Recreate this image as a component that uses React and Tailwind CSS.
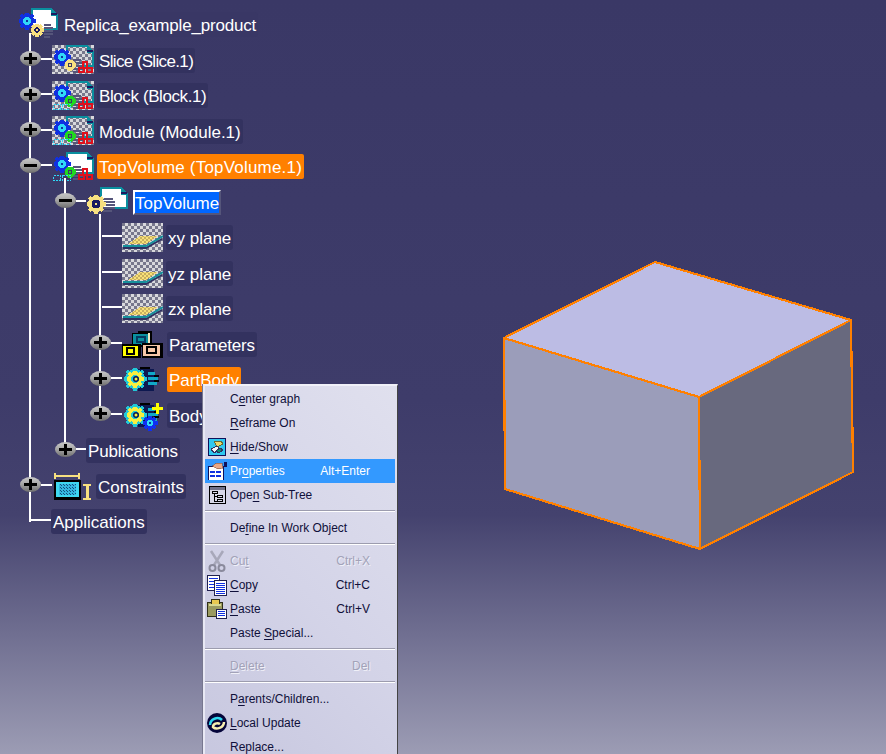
const CHECK_ID = "dither";

function Gear({ x, y, r, fill, hole = "#1a1a60", ring, dot = true }) {
  const teeth = [0, 45, 90, 135];
  return (
    <g shapeRendering="crispEdges">
      {teeth.map((a) => (
        <rect key={a} x={x - r - 1.5} y={y - 2} width={2 * r + 3} height={4} fill={fill} transform={`rotate(${a} ${x} ${y})`} />
      ))}
      <circle cx={x} cy={y} r={r} fill={fill} />
      <circle cx={x} cy={y} r={r * 0.55} fill={ring || hole} />
      {dot && <rect x={x - 1} y={y - 1} width={2} height={2} fill={ring ? "#1030a0" : fill} />}
    </g>
  );
}

function Shadow({ x, y, w = 10 }) {
  return (
    <g fill="#55557a" shapeRendering="crispEdges">
      <rect x={x} y={y - 6} width={w - 2} height={2} />
      <rect x={x} y={y - 3} width={w} height={2} />
      <rect x={x} y={y} width={w} height={2} />
      <rect x={x} y={y + 3} width={w} height={2} />
      <rect x={x} y={y + 6} width={w - 3} height={2} />
    </g>
  );
}

function Page({ x, y, w, h, dim }) {
  return (
    <g shapeRendering="crispEdges">
      <path d={`M${x} ${y}h${w - 7}l7 6v${h - 6}h${-w}z`} fill={dim ? `url(#${CHECK_ID})` : "#fff"} />
      <path d={`M${x} ${y}h${w - 7}v2h${-w + 9}v${h - 2}h-2z`} fill="#0a8f9f" />
      <path d={`M${x + w - 7} ${y}l7 6v2h-7z`} fill="#0a8f9f" />
      <rect x={x + w - 7} y={y + 5} width={6} height={2} fill="#1a1a60" />
      <rect x={x + w - 2} y={y + 7} width={2} height={h - 7} fill="#0a8f9f" />
      <rect x={x} y={y + h - 2} width={w} height={2} fill="#0a8f9f" />
    </g>
  );
}

function Links({ x, y }) {
  return (
    <g fill="none" stroke="#e0101c" strokeWidth="2" shapeRendering="crispEdges">
      <rect x={x + 4} y={y} width={4} height={6} />
      <rect x={x} y={y + 6} width={5} height={4} />
      <rect x={x + 8} y={y + 6} width={5} height={4} />
    </g>
  );
}

function Defs() {
  return (
    <defs>
      <pattern id={CHECK_ID} width="6" height="6" patternUnits="userSpaceOnUse">
        <rect width="6" height="6" fill="#d8d8dc" />
        <rect width="3" height="3" fill="#77778c" />
        <rect x="3" y="3" width="3" height="3" fill="#77778c" />
      </pattern>
      <pattern id="yellowDither" width="4" height="4" patternUnits="userSpaceOnUse">
        <rect width="4" height="4" fill="#f8e078" />
        <rect width="2" height="2" fill="#c8b060" />
        <rect x="2" y="2" width="2" height="2" fill="#c8b060" />
      </pattern>
    </defs>
  );
}

function RootIcon() {
  return (
    <svg width="41" height="32" className="shrink-0" overflow="visible">
      <Defs />
      <Page x={14} y={-1} w={27} h={22} />
      <Shadow x={27} y={21} w={9} />
      <Gear x={10} y={12} r={7} fill="#1030e0" ring="#30d8f8" />
      <Gear x={20} y={21} r={5} fill="#f8e080" />
    </svg>
  );
}

function InstanceIcon({ gear = "#f8e080", bars, dim = true }) {
  return (
    <svg width="42" height="30" className="shrink-0" overflow="visible">
      <Defs />
      {dim && <rect x="0" y="0" width="42" height="29" fill={`url(#${CHECK_ID})`} />}
      <Page x={14} y={0} w={28} h={22} dim={dim} />
      <Shadow x={21} y={20} w={10} />
      <Gear x={10} y={12} r={7} fill="#1030e0" ring="#30d8f8" />
      <Gear x={18} y={20} r={4} fill={gear} hole="#3b3966" />
      {bars && (
        <g fill="none" stroke="#30d8f8" strokeWidth="1" shapeRendering="crispEdges" strokeDasharray="2 1">
          <rect x="1.5" y="23.5" width="7" height="5" />
          <rect x="10.5" y="23.5" width="8" height="5" />
        </g>
      )}
      <Links x={27} y={17} />
    </svg>
  );
}

function PartIcon() {
  return (
    <svg width="42" height="30" className="shrink-0" overflow="visible">
      <Defs />
      <Page x={14} y={0} w={28} h={22} />
      <Shadow x={17} y={17} w={12} />
      <Gear x={10} y={17} r={8} fill="#f8e080" />
    </svg>
  );
}

function PlaneIcon() {
  return (
    <svg width="41" height="29" className="shrink-0">
      <Defs />
      <rect width="41" height="29" fill={`url(#${CHECK_ID})`} />
      <path d="M6 21L18 13H36L24 21z" fill="url(#yellowDither)" shapeRendering="crispEdges" />
      <path d="M1 25H24L40 16" fill="none" stroke="#303060" strokeWidth="2" />
      <path d="M1 23H24L41 13" fill="none" stroke="#16909c" strokeWidth="2" />
    </svg>
  );
}

function ParamsIcon() {
  return (
    <svg width="41" height="27" className="shrink-0" shapeRendering="crispEdges">
      <rect x="10" y="2" width="18" height="14" fill="#000" />
      <rect x="28" y="0" width="2" height="14" fill="#000" />
      <rect x="16" y="0" width="13" height="2" fill="#000" />
      <rect x="11" y="3" width="16" height="11" fill="#0a8f9f" />
      <rect x="26" y="2" width="2" height="12" fill="#f0e8c0" />
      <rect x="15" y="6" width="8" height="5" fill="none" stroke="#063a60" strokeWidth="2" />
      <rect x="0" y="13" width="19" height="14" fill="#000" />
      <rect x="1" y="15" width="15" height="10" fill="#ffff00" />
      <rect x="5" y="17" width="7" height="6" fill="none" stroke="#000" strokeWidth="2" />
      <rect x="20" y="12" width="21" height="15" fill="#000" />
      <rect x="21" y="14" width="17" height="11" fill="#f8c8a8" />
      <rect x="25" y="16" width="9" height="6" fill="none" stroke="#000" strokeWidth="2" />
    </svg>
  );
}

function BodyIcon({ extra }) {
  return (
    <svg width="38" height="27" className="shrink-0" overflow="visible">
      <g shapeRendering="crispEdges">
        <rect x="16" y="3" width="16" height="22" fill="#0d1850" />
        <rect x="18" y="1" width="10" height="2" fill="#000" />
        <rect x="26" y="6" width="7" height="3" fill="#10a8c8" />
        <rect x="26" y="11" width="10" height="3" fill="#10a8c8" />
        <rect x="26" y="16" width="9" height="3" fill="#10a8c8" />
        <rect x="32" y="9" width="5" height="2" fill="#000" />
        <rect x="32" y="14" width="5" height="2" fill="#000" />
      </g>
      <Gear x={13} y={13} r={10} fill="#20c8d8" ring="#20c8d8" dot={false} />
      <Gear x={13} y={13} r={7} fill="#f8f040" hole="#20c8d8" dot={false} />
      <circle cx="14" cy="13" r="3" fill="#0d1850" />
      <circle cx="14" cy="13" r="1.5" fill="#f8f040" />
      {extra && (
        <g shapeRendering="crispEdges">
          <rect x="30" y="5" width="11" height="3" fill="#ffff00" />
          <rect x="34" y="1" width="3" height="11" fill="#ffff00" />
          <Gear x={28} y={21} r={6} fill="#1030f0" ring="#30d8f8" />
        </g>
      )}
    </svg>
  );
}

function ConstraintIcon() {
  return (
    <svg width="39" height="27" className="shrink-0" shapeRendering="crispEdges">
      <defs>
        <pattern id="blueMesh" width="3" height="3" patternUnits="userSpaceOnUse">
          <rect width="3" height="3" fill="#35b8e0" />
          <rect width="1" height="1" fill="#14507f" />
          <rect x="2" y="2" width="1" height="1" fill="#14507f" />
        </pattern>
      </defs>
      <rect x="2" y="0" width="2" height="6" fill="#f8e080" />
      <rect x="26" y="0" width="2" height="6" fill="#f8e080" />
      <rect x="3" y="2" width="25" height="2" fill="#f8e080" />
      <rect x="2" y="7" width="27" height="20" fill="#000" />
      <rect x="4" y="9" width="23" height="15" fill="#40d8f0" />
      <rect x="7" y="11" width="17" height="11" fill="url(#blueMesh)" />
      <rect x="31" y="11" width="8" height="2" fill="#f8e080" />
      <rect x="34" y="11" width="3" height="15" fill="#f8e080" />
      <rect x="31" y="25" width="8" height="2" fill="#f8e080" />
    </svg>
  );
}

function Toggle({ minus }) {
  return (
    <div className="relative w-[21px] h-[15px] shrink-0 rounded-[50%] bg-[linear-gradient(#c8c8c8,#a8a8a8_45%,#6e6e6e)] flex items-center justify-center">
      <span className="absolute w-[13px] h-[3px] bg-black" />
      {!minus && <span className="absolute w-[3px] h-[11px] bg-black" />}
    </div>
  );
}

function Label({ children, kind, track }) {
  const styles = {
    plain: "bg-[#33325f] rounded-[3px]",
    faint: "bg-[#393765] rounded-[3px]",
    orange: "bg-[#ff8000] rounded-[2px]",
    selected:
      "bg-[#0066ff] h-[23px] border-t-2 border-l-2 border-white border-r-2 border-b-2 border-r-[#55557a] border-b-[#55557a] px-0!",
  };
  return (
    <span className={`h-[25px] px-[2px] pt-[2px] flex items-center whitespace-nowrap text-white text-[17px] leading-none shrink-0 ${track || ""} ${styles[kind || "plain"]}`}>
      {children}
    </span>
  );
}

function Row({ pad, toggle, stub = 11, icon, gap = 4, kind, track, children }) {
  return (
    <div className="flex items-center h-[35.5px]" style={{ paddingLeft: pad }}>
      {toggle && (
        <div className="flex items-center mb-[3px]">
          <Toggle minus={toggle === "minus"} />
          <span className="h-[2px] bg-white" style={{ width: stub }} />
        </div>
      )}
      {!toggle && stub > 0 && <span className="h-[2px] bg-white mb-[3px]" style={{ width: stub }} />}
      {icon}
      <span style={{ marginLeft: gap }}>
        <Label kind={kind} track={track}>{children}</Label>
      </span>
    </div>
  );
}

function Tree() {
  return (
    <div className="relative z-0 pt-[7px] font-['Liberation_Sans',sans-serif]">
      <span className="absolute left-[29px] top-[33px] h-[489px] w-[2px] bg-white" />
      <span className="absolute left-[64px] top-[178px] h-[270px] w-[2px] bg-white" />
      <span className="absolute left-[99px] top-[214px] h-[200px] w-[2px] bg-white" />

      <Row pad={17} stub={0} icon={<RootIcon />} gap={4} kind="faint" track="tracking-[-0.2px]">Replica_example_product</Row>
      <Row pad={20} toggle="plus" icon={<InstanceIcon />} gap={3} track="tracking-[-0.65px]">Slice (Slice.1)</Row>
      <Row pad={20} toggle="plus" icon={<InstanceIcon gear="#20d820" bars />} gap={3} track="tracking-[-0.4px]">Block (Block.1)</Row>
      <Row pad={20} toggle="plus" icon={<InstanceIcon gear="#20d820" bars />} gap={3}>Module (Module.1)</Row>
      <Row pad={20} toggle="minus" icon={<InstanceIcon gear="#20d820" bars dim={false} />} gap={3} kind="orange" track="tracking-[0.2px]">TopVolume (TopVolume.1)</Row>
      <Row pad={55} toggle="minus" stub={10} icon={<PartIcon />} gap={5} kind="selected">TopVolume</Row>
      <Row pad={102} stub={20} icon={<PlaneIcon />} gap={3}>xy plane</Row>
      <Row pad={102} stub={20} icon={<PlaneIcon />} gap={3}>yz plane</Row>
      <Row pad={102} stub={20} icon={<PlaneIcon />} gap={3}>zx plane</Row>
      <Row pad={90} toggle="plus" icon={<ParamsIcon />} gap={4} track="tracking-[-0.2px]">Parameters</Row>
      <Row pad={90} toggle="plus" icon={<BodyIcon />} gap={7} kind="orange">PartBody</Row>
      <Row pad={90} toggle="plus" icon={<BodyIcon extra />} gap={7}>Body.2</Row>
      <Row pad={55} toggle="plus" stub={10} gap={0} track="tracking-[-0.15px]">Publications</Row>
      <Row pad={20} toggle="plus" icon={<ConstraintIcon />} gap={5}>Constraints</Row>
      <Row pad={30} stub={21} gap={0}>Applications</Row>
    </div>
  );
}

function Cube() {
  return (
    <svg width="886" height="754" className="absolute left-0 top-0 pointer-events-none">
      <polygon points="504,338 699,397 700,549 505,489" fill="#9b9dba" />
      <polygon points="699,397 851,320 853,472 700,549" fill="#68697e" />
      <polygon points="655,262 851,320 699,397 504,338" fill="#bcbce4" />
      <g fill="none" stroke="#ff8000" strokeWidth="2.2" strokeLinejoin="round" shapeRendering="crispEdges">
        <polygon points="504,338 655,262 851,320 699,397" />
        <polyline points="504,338 505,489 700,549 853,472 851,320" />
        <line x1="699" y1="397" x2="700" y2="549" />
      </g>
    </svg>
  );
}

function HideIcon() {
  return (
    <svg width="18" height="18" shapeRendering="crispEdges">
      <rect x="0.5" y="0.5" width="17" height="17" fill="#30c8f0" stroke="#10105a" />
      <path d="M6 3h7l2 3-6 3z" fill="#e8d870" stroke="#6a6a30" />
      <path d="M3 11l6-3 3 3-6 4z" fill="#f8f8f8" stroke="#303060" />
      <path d="M8 13l4-3 3 2-4 3z" fill="#0a8f70" stroke="#303060" />
    </svg>
  );
}

function PropsIcon() {
  return (
    <svg width="21" height="18" shapeRendering="crispEdges">
      <rect x="1" y="4" width="15" height="14" fill="#fff" stroke="#10105a" />
      <rect x="3" y="9" width="11" height="2" fill="#1030e0" />
      <rect x="3" y="13" width="11" height="2" fill="#1030e0" />
      <rect x="8" y="9" width="1" height="6" fill="#fff" />
      <path d="M5 4l5-3h5l1 5-5 1z" fill="#e8a888" stroke="#704030" strokeWidth="0.5" />
      <rect x="17" y="0" width="3" height="5" fill="#10105a" />
    </svg>
  );
}

function SubTreeIcon() {
  return (
    <svg width="17" height="18" shapeRendering="crispEdges">
      <rect x="0.5" y="0.5" width="16" height="17" fill="#d8d8e8" stroke="#000" />
      <rect x="1" y="1" width="15" height="3" fill="#707088" />
      <g fill="none" stroke="#000">
        <rect x="3.5" y="5.5" width="5" height="2" />
        <rect x="8.5" y="9.5" width="5" height="2" />
        <rect x="8.5" y="13.5" width="5" height="2" />
        <path d="M5.5 8v7h3M5.5 10.5h3" />
      </g>
    </svg>
  );
}

function ScissorsIcon() {
  return (
    <svg width="18" height="22" fill="none" stroke="#a8a8ba">
      <path d="M3 1l9 14M15 1L6 15" strokeWidth="2.5" />
      <circle cx="4.5" cy="18" r="3" strokeWidth="2" stroke="#8a8a9c" />
      <circle cx="13.5" cy="18" r="3" strokeWidth="2" stroke="#8a8a9c" />
    </svg>
  );
}

function DocLines({ x, y, w, h, lines }) {
  return (
    <g shapeRendering="crispEdges">
      <rect x={x + 0.5} y={y + 0.5} width={w} height={h} fill="#fff" stroke="#202050" />
      {lines.map((d) => (
        <rect key={d} x={x + 2} y={y + d} width={w - 3} height={1} fill="#1030e0" />
      ))}
    </g>
  );
}

function CopyIcon() {
  return (
    <svg width="20" height="21">
      <DocLines x={0} y={0} w={12} h={15} lines={[3, 6, 9, 12]} />
      <DocLines x={7} y={5} w={12} h={15} lines={[3, 5, 7, 9, 11, 13]} />
    </svg>
  );
}

function PasteIcon() {
  return (
    <svg width="20" height="20" shapeRendering="crispEdges">
      <rect x="0.5" y="3.5" width="15" height="14" fill="#9a9a60" stroke="#303018" />
      <rect x="4" y="0.5" width="8" height="5" fill="#e8c850" stroke="#303018" />
      <rect x="2" y="5" width="12" height="2" fill="#d8d890" />
      <DocLines x={9} y={10} w={10} h={9} lines={[2, 4, 6]} />
    </svg>
  );
}

function SwirlIcon() {
  return (
    <svg width="20" height="20">
      <circle cx="10" cy="10" r="10" fill="#05053a" />
      <path d="M3 12c0-6 8-9 12-5" fill="none" stroke="#30d8f0" strokeWidth="2.5" />
      <path d="M17 9c0 6-8 8-11 5 0-3 4-5 7-3" fill="none" stroke="#f8f0b0" strokeWidth="2.5" />
    </svg>
  );
}

function Mn({ children }) {
  return <span className="underline underline-offset-2">{children}</span>;
}

function Item({ icon, children, shortcut, active, off }) {
  const color = active ? "text-white" : off ? "text-[#a2a2b8] [text-shadow:1px_1px_0_#f0f0f8]" : "text-[#10103a]";
  return (
    <div className={`relative flex items-center h-6 pl-[25px] pr-[25px] ${color} ${active ? "bg-[#3399ff]" : ""}`}>
      {icon && <span className="absolute left-[1px] top-0 h-6 w-[22px] flex items-center justify-center">{icon}</span>}
      <span className="flex-1 whitespace-nowrap">{children}</span>
      {shortcut && <span className="whitespace-nowrap">{shortcut}</span>}
    </div>
  );
}

function Sep() {
  return (
    <div className="h-[9px] pt-[3px]">
      <div className="h-[2px] w-full bg-[#9c9cae] border-b border-white" />
    </div>
  );
}

function ContextMenu() {
  return (
    <div className="absolute z-10 left-[203px] top-[384px] w-[195px] h-[400px] border-r border-r-[#444] border-l-2 border-l-[#e8e8f4] border-t-2 border-t-[#f0f0f8] pr-[2px] pt-[1px] shadow-[-1px_0_0_#77778f] bg-[linear-gradient(45deg,#c6c6de,#d4d4e8_50%,#e0e0ee)] text-[12px] leading-none font-['Liberation_Sans',sans-serif]">
      <Item>C<Mn>e</Mn>nter graph</Item>
      <Item><Mn>R</Mn>eframe On</Item>
      <Item icon={<HideIcon />}><Mn>H</Mn>ide/Show</Item>
      <Item icon={<PropsIcon />} shortcut="Alt+Enter" active>Pr<Mn>o</Mn>perties</Item>
      <Item icon={<SubTreeIcon />}>Ope<Mn>n</Mn> Sub-Tree</Item>
      <Sep />
      <Item>De<Mn>f</Mn>ine In Work Object</Item>
      <Sep />
      <Item icon={<ScissorsIcon />} shortcut="Ctrl+X" off>Cu<Mn>t</Mn></Item>
      <Item icon={<CopyIcon />} shortcut="Ctrl+C"><Mn>C</Mn>opy</Item>
      <Item icon={<PasteIcon />} shortcut="Ctrl+V"><Mn>P</Mn>aste</Item>
      <Item>Paste <Mn>S</Mn>pecial...</Item>
      <Sep />
      <Item shortcut="Del" off><Mn>D</Mn>elete</Item>
      <Sep />
      <Item>P<Mn>a</Mn>rents/Children...</Item>
      <Item icon={<SwirlIcon />}><Mn>L</Mn>ocal Update</Item>
      <Item>Replace...</Item>
    </div>
  );
}

export default function App() {
  return (
    <div className="relative w-[886px] h-[754px] overflow-hidden bg-[linear-gradient(#3a3866_0px,#3e3c6a_400px,#44426e_515px,#9c9cb4_754px)]">
      <Tree />
      <Cube />
      <ContextMenu />
    </div>
  );
}
